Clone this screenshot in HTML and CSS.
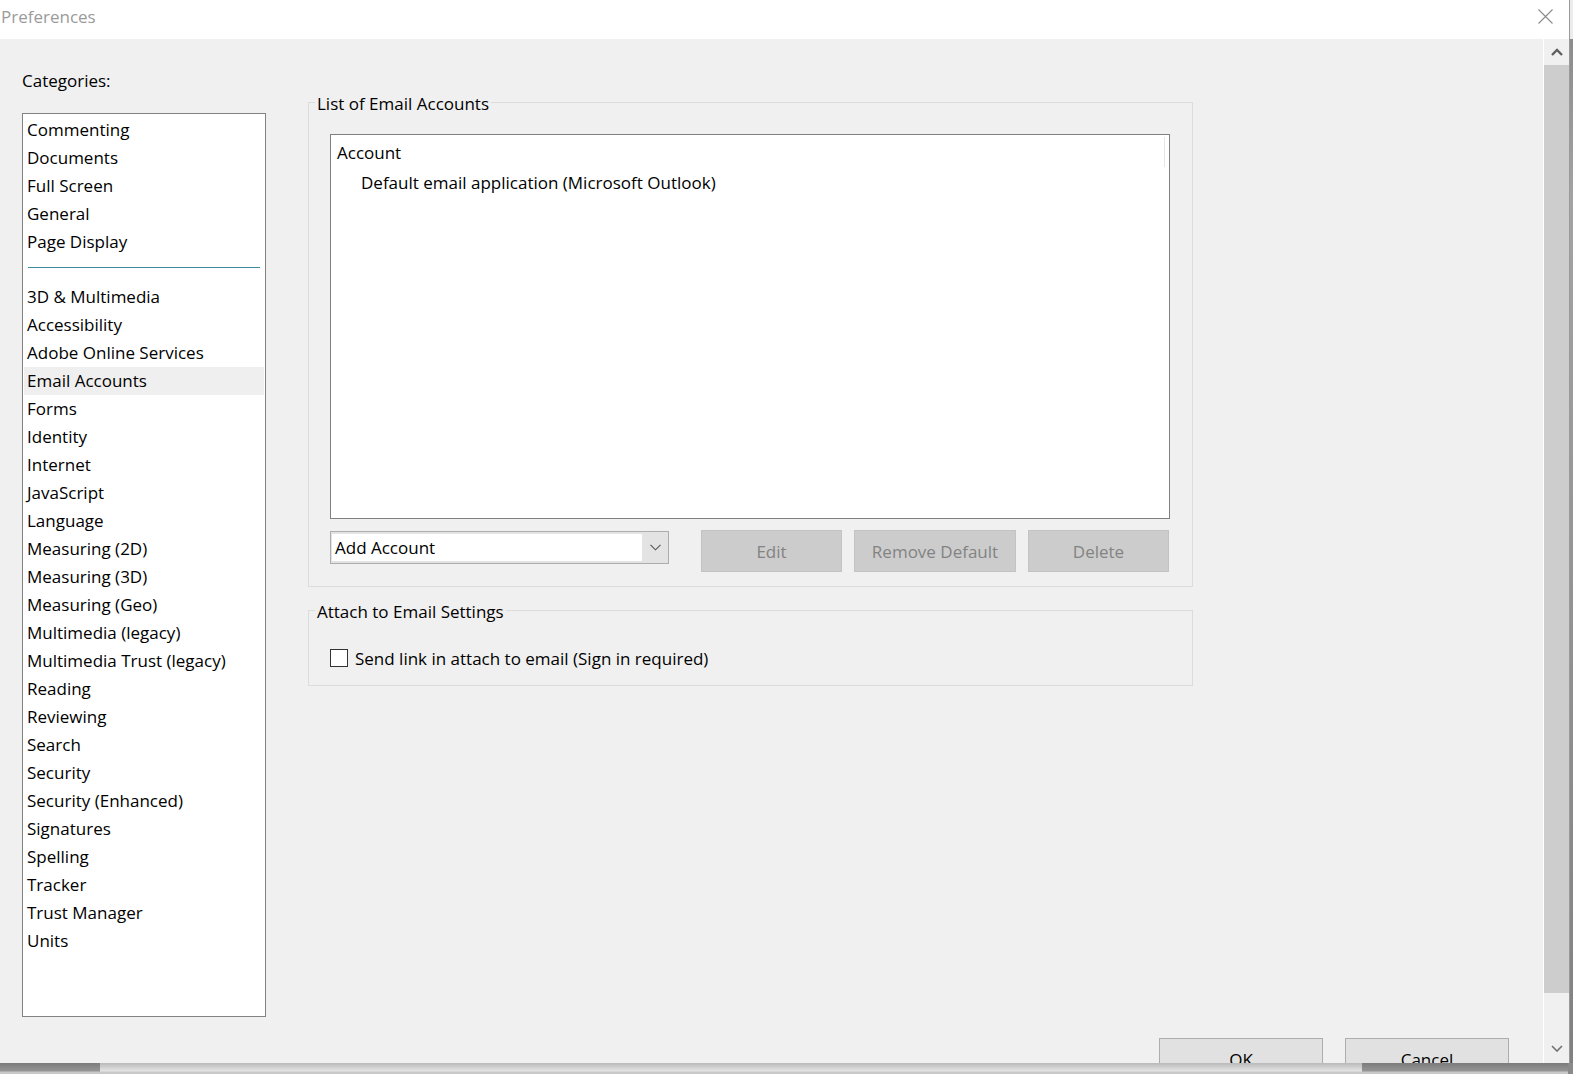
FILE: index.html
```html
<!DOCTYPE html>
<html>
<head>
<meta charset="utf-8">
<title>Preferences</title>
<link rel="stylesheet" href="styles.css">
</head>
<body>
<div class="screen">
  <div class="top">
    <div class="dialog">
      <div class="titlebar">
        <span class="title">Preferences</span>
        <svg class="close" width="15" height="15" viewBox="0 0 15 15"><path d="M0.5 0.5L14.5 14.5M14.5 0.5L0.5 14.5" stroke="#8a8a8a" stroke-width="1.1" fill="none"/></svg>
      </div>
      <div class="main">
        <div class="content">
          <div class="upper">
            <div class="leftcol">
              <div class="label">Categories:</div>
              <div class="catlist">
                <div class="cat">Commenting</div>
                <div class="cat">Documents</div>
                <div class="cat">Full Screen</div>
                <div class="cat">General</div>
                <div class="cat">Page Display</div>
                <div class="sep"><div class="sepline"></div></div>
                <div class="cat">3D &amp; Multimedia</div>
                <div class="cat">Accessibility</div>
                <div class="cat">Adobe Online Services</div>
                <div class="cat selected">Email Accounts</div>
                <div class="cat">Forms</div>
                <div class="cat">Identity</div>
                <div class="cat">Internet</div>
                <div class="cat">JavaScript</div>
                <div class="cat">Language</div>
                <div class="cat">Measuring (2D)</div>
                <div class="cat">Measuring (3D)</div>
                <div class="cat">Measuring (Geo)</div>
                <div class="cat">Multimedia (legacy)</div>
                <div class="cat">Multimedia Trust (legacy)</div>
                <div class="cat">Reading</div>
                <div class="cat">Reviewing</div>
                <div class="cat">Search</div>
                <div class="cat">Security</div>
                <div class="cat">Security (Enhanced)</div>
                <div class="cat">Signatures</div>
                <div class="cat">Spelling</div>
                <div class="cat">Tracker</div>
                <div class="cat">Trust Manager</div>
                <div class="cat">Units</div>
              </div>
            </div>
            <div class="rightcol">
              <fieldset class="group">
                <legend>List of Email Accounts</legend>
                <div class="group-body accounts">
                  <div class="listbox">
                    <div class="lb-head"><div class="lb-col">Account</div></div>
                    <div class="lb-item">Default email application (Microsoft Outlook)</div>
                  </div>
                  <div class="btnrow">
                    <div class="combo">
                      <div class="combo-field">Add Account</div>
                      <div class="combo-btn"><svg width="11" height="7" viewBox="0 0 11 7"><path d="M0.5 0.8L5.5 5.8L10.5 0.8" stroke="#555" stroke-width="1.1" fill="none"/></svg></div>
                    </div>
                    <div class="btn disabled edit">Edit</div>
                    <div class="btn disabled remove">Remove Default</div>
                    <div class="btn disabled del">Delete</div>
                  </div>
                </div>
              </fieldset>
              <fieldset class="group attach">
                <legend>Attach to Email Settings</legend>
                <div class="group-body attach-body">
                  <div class="checkrow">
                    <span class="checkbox"></span>
                    <span>Send link in attach to email (Sign in required)</span>
                  </div>
                </div>
              </fieldset>
            </div>
          </div>
          <div class="footer">
            <div class="btn normal">OK</div>
            <div class="btn normal">Cancel</div>
          </div>
        </div>
        <div class="scrollbar">
          <div class="sb-up"><svg width="12" height="8" viewBox="0 0 12 8"><path d="M1 7L6 2L11 7" stroke="#606060" stroke-width="2.4" fill="none"/></svg></div>
          <div class="sb-thumb"></div>
          <div class="sb-track"></div>
          <div class="sb-down"><svg width="12" height="7" viewBox="0 0 12 7"><path d="M1 1L6 6L11 1" stroke="#707070" stroke-width="1.6" fill="none"/></svg></div>
        </div>
      </div>
    </div>
    <div class="bgstrip"></div>
  </div>
  <div class="shadow">
    <div class="sh-dark sh-left"></div>
    <div class="sh-light"></div>
    <div class="sh-dark sh-right"></div>
    <div class="sh-end"></div>
  </div>
</div>
</body>
</html>
```

FILE: styles.css
```css
html, body {
  margin: 0;
  padding: 0;
}
body {
  width: 1573px;
  height: 1074px;
  overflow: hidden;
  font-family: "Open Sans", "Noto Sans", sans-serif;
  font-size: 17px;
  color: #000;
  background: #8f8f8f;
}
.screen {
  width: 1573px;
  height: 1074px;
  display: flex;
  flex-direction: column;
}
.top {
  display: flex;
  height: 1063px;
  flex-shrink: 0;
}
.dialog {
  width: 1569px;
  height: 1063px;
  display: flex;
  flex-direction: column;
  overflow: hidden;
  background: #f0f0f0;
}
.titlebar {
  height: 39px;
  flex-shrink: 0;
  background: #fff;
  display: flex;
  justify-content: space-between;
  align-items: flex-start;
  padding: 0 16px 0 1px;
  box-sizing: border-box;
}
.title {
  color: #9b9b9b;
  line-height: 24px;
  margin-top: 5px;
}
.close {
  margin-top: 9px;
  display: block;
}
.main {
  flex: 1;
  display: flex;
  min-height: 0;
}
.content {
  flex: 1;
  display: flex;
  flex-direction: column;
  padding: 30px 34px 0 22px;
  overflow: hidden;
  min-width: 0;
}
.upper {
  display: flex;
  gap: 42px;
  flex-shrink: 0;
}
.leftcol {
  width: 244px;
  flex-shrink: 0;
}
.label {
  line-height: 24px;
  margin-bottom: 20px;
}
.catlist {
  height: 904px;
  box-sizing: border-box;
  border: 1px solid #828282;
  background: #fff;
  padding-top: 2px;
}
.cat {
  height: 28px;
  line-height: 28px;
  padding-left: 3px;
  margin: 0 1px;
  white-space: nowrap;
}
.cat.selected {
  background: #efefef;
}
.sep {
  height: 27px;
  padding: 11px 5px 0 5px;
  box-sizing: border-box;
}
.sepline {
  height: 1px;
  background: #3f8ca3;
}
.rightcol {
  width: 885px;
  flex-shrink: 0;
  padding-top: 21px;
}
.group {
  margin: 0;
  padding: 0;
  border: 1px solid #dcdcdc;
  min-width: 0;
}
.group legend {
  margin-left: 6px;
  padding: 3px 2px 0;
  line-height: 21px;
}
.group-body.accounts {
  padding: 20px 22px 14px 21px;
}
.listbox {
  height: 385px;
  box-sizing: border-box;
  border: 1px solid #7f7f7f;
  background: #fff;
}
.lb-head {
  display: flex;
  margin: 1px 4px 0 0;
  height: 31px;
}
.lb-col {
  flex: 1;
  line-height: 31px;
  padding-left: 6px;
  border-right: 1px solid #e5e5e5;
  margin-top: 1px;
}
.lb-item {
  line-height: 28px;
  padding-top: 2px;
  padding-left: 30px;
}
.btnrow {
  display: flex;
  align-items: flex-start;
  margin-top: 11px;
  height: 42px;
}
.combo {
  width: 339px;
  height: 33px;
  box-sizing: border-box;
  margin-top: 1px;
  border: 1px solid #adadad;
  background: #e3e3e3;
  padding: 2px 0 2px 1px;
  display: flex;
}
.combo-field {
  flex: 1;
  background: #fff;
  line-height: 27px;
  padding-left: 3px;
}
.combo-btn {
  width: 26px;
  display: flex;
  align-items: center;
  justify-content: center;
}
.btn {
  height: 42px;
  box-sizing: border-box;
  display: flex;
  align-items: center;
  justify-content: center;
  flex-shrink: 0;
}
.btn.disabled {
  background: #cccccc;
  border: 1px solid #c3c3c3;
  color: #838383;
}
.edit {
  width: 141px;
  margin-left: 32px;
}
.remove {
  width: 162px;
  margin-left: 12px;
}
.del {
  width: 141px;
  margin-left: 12px;
}
.group.attach {
  margin-top: 11px;
}
.attach-body {
  padding: 24px 21px 15px 21px;
}
.checkrow {
  display: flex;
  align-items: center;
  height: 24px;
  gap: 7px;
}
.checkbox {
  width: 18px;
  height: 18px;
  box-sizing: border-box;
  border: 1px solid #333;
  background: #fff;
}
.footer {
  display: flex;
  justify-content: flex-end;
  gap: 22px;
  margin-top: 21px;
  flex-shrink: 0;
}
.btn.normal {
  width: 164px;
  background: #e1e1e1;
  border: 1px solid #adadad;
  color: #000;
}
.scrollbar {
  width: 26px;
  box-sizing: border-box;
  border-left: 1px solid #fff;
  display: flex;
  flex-direction: column;
  background: #f0f0f0;
}
.sb-up {
  height: 26px;
  display: flex;
  align-items: center;
  justify-content: center;
  flex-shrink: 0;
}
.sb-thumb {
  height: 928px;
  background: #cdcdcd;
  flex-shrink: 0;
}
.sb-track {
  flex: 1;
}
.sb-down {
  height: 30px;
  display: flex;
  align-items: center;
  justify-content: center;
  flex-shrink: 0;
}
.bgstrip {
  flex: 1;
  background: linear-gradient(to bottom, #ececec 0, #ececec 39px, #8c8c8c 39px, #a3a3a3 200px, #808080 1063px);
  border-left: 1px solid #9a9a9a;
}
.shadow {
  height: 11px;
  display: flex;
  flex-shrink: 0;
  background: #f0f0f0;
}
.sh-dark {
  background: linear-gradient(to bottom, #7c7c7c 0, #959595 8px, #c8c8c8 9px, #c8c8c8 11px);
}
.sh-left {
  width: 100px;
}
.sh-light {
  flex: 1;
  background: linear-gradient(to bottom, #b9b9b9 0, #e4e4e4 8px, #c9c9c9 9px, #c9c9c9 11px);
}
.sh-right {
  flex: 0 0 206px;
}
.sh-end {
  width: 5px;
  background: #8a8a8a;
}
```
